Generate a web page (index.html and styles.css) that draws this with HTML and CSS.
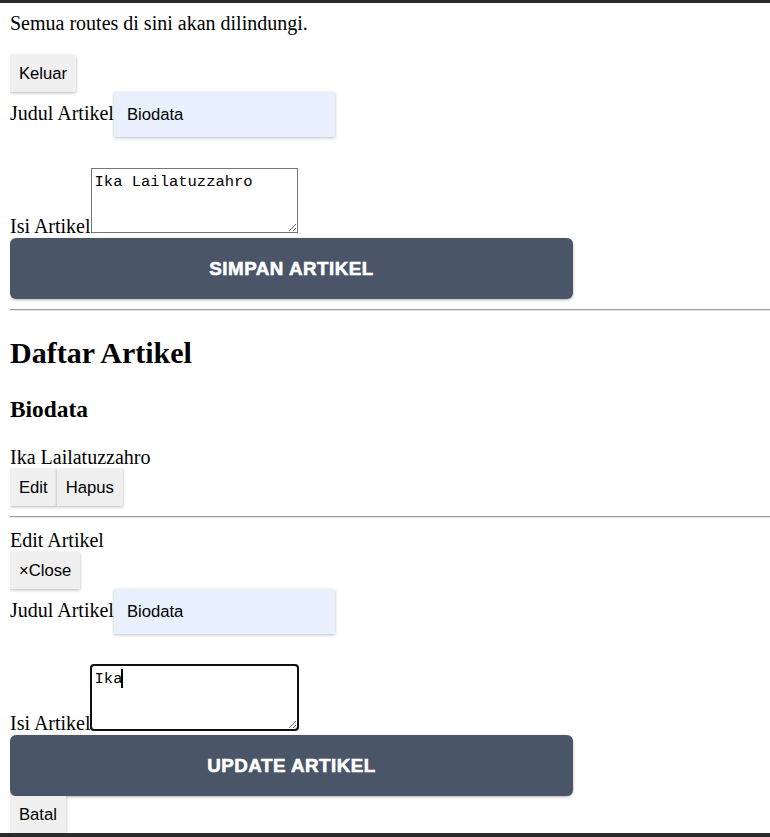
FILE: index.html
```html
<!DOCTYPE html>
<html lang="id">
<head>
<meta charset="utf-8">
<title>Artikel</title>
<link rel="stylesheet" href="styles.css">
</head>
<body>
<div class="frame frame-top"></div>
<main class="page">
  <p class="intro">Semua routes di sini akan dilindungi.</p>
  <div class="toolbar"><button class="btn" type="button">Keluar</button></div>
  <form class="article-form">
    <div class="field field-title"><label class="field-label">Judul Artikel</label><input class="text-input" type="text" value="Biodata"></div>
    <div class="field field-body"><label class="field-label">Isi Artikel</label><span class="area-wrap"><textarea class="text-area">Ika Lailatuzzahro</textarea></span></div>
    <button class="btn-primary" type="button">Simpan Artikel</button>
  </form>
  <div class="rule"></div>
  <h2 class="list-title">Daftar Artikel</h2>
  <article class="article">
    <h3 class="article-title">Biodata</h3>
    <div class="article-body">Ika Lailatuzzahro</div>
    <div class="toolbar"><button class="btn" type="button">Edit</button><button class="btn" type="button">Hapus</button></div>
  </article>
  <div class="rule"></div>
  <div class="edit-heading">Edit Artikel</div>
  <div class="toolbar"><button class="btn" type="button">×Close</button></div>
  <form class="article-form">
    <div class="field field-title"><label class="field-label">Judul Artikel</label><input class="text-input" type="text" value="Biodata"></div>
    <div class="field field-body"><label class="field-label">Isi Artikel</label><span class="area-wrap"><textarea class="text-area is-focused">Ika</textarea><span class="caret"></span></span></div>
    <button class="btn-primary" type="button">Update Artikel</button>
  </form>
  <div class="toolbar"><button class="btn" type="button">Batal</button></div>
</main>
<div class="frame frame-bottom"></div>
</body>
</html>
```
FILE: styles.css
```css
html {
  background: #ffffff;
  overflow-x: hidden;
}

body {
  margin: 0 0 0 10px;
  font-family: "Liberation Serif", "Times New Roman", serif;
  font-size: 20px;
  color: #000000;
}

.frame {
  position: fixed;
  left: 0;
  right: 0;
  background: #2b2b2b;
  z-index: 5;
}

.frame-top {
  top: 0;
  height: 3px;
}

.frame-bottom {
  bottom: 0;
  height: 4px;
}

.intro {
  margin: 12px 0 20px;
}

.toolbar {
  display: flex;
}

.btn {
  font-family: "Liberation Sans", Arial, sans-serif;
  font-size: 16.67px;
  line-height: 19px;
  color: #000000;
  background: #efefef;
  border: none;
  padding: 9px 9px;
  margin: 0;
  box-shadow: 0 1px 3px rgba(0, 0, 0, 0.28);
  cursor: pointer;
}

.article-form {
  margin: 0;
}

.field-title {
  margin-bottom: 31px;
}

.field-label {
  font-size: 20px;
}

.text-input {
  font-family: "Liberation Sans", Arial, sans-serif;
  font-size: 16.67px;
  color: #000000;
  background: #e8f0fe;
  border: none;
  width: 221px;
  height: 45px;
  box-sizing: border-box;
  padding: 0 13px;
  margin: 0;
  vertical-align: baseline;
  box-shadow: 0 1px 3px rgba(0, 0, 0, 0.25);
}

.area-wrap {
  position: relative;
  display: inline-block;
}

.text-area {
  font-family: "Liberation Mono", "Courier New", monospace;
  font-size: 15.5px;
  line-height: 18px;
  width: 207px;
  height: 65px;
  box-sizing: border-box;
  padding: 4px 3px;
  margin: 0;
  border: 1px solid #767676;
  border-radius: 0;
  vertical-align: baseline;
  resize: both;
  color: #000000;
  background: #ffffff;
}

.text-area.is-focused {
  outline: 2px solid #101010;
  outline-offset: -1px;
  border-radius: 3px;
}

.caret {
  position: absolute;
  left: 30px;
  top: 4px;
  width: 2px;
  height: 19px;
  background: #000000;
}

.btn-primary {
  display: block;
  width: 563px;
  height: 61px;
  margin: 0;
  border: none;
  border-radius: 6px;
  background: #4a5568;
  color: #ffffff;
  font-family: "Liberation Sans", Arial, sans-serif;
  font-weight: 700;
  font-size: 18.75px;
  letter-spacing: 0.5px;
  -webkit-text-stroke: 0.6px #ffffff;
  text-transform: uppercase;
  box-shadow: 0 1px 3px rgba(0, 0, 0, 0.3);
  cursor: pointer;
}

.rule {
  height: 0;
  margin: 10px 0;
  border-top: 1px solid #9a9a9a;
  border-bottom: 1px solid #e6e6e6;
}

.list-title {
  font-size: 30px;
  font-weight: 700;
  margin: 25px 0 26px;
}

.article-title {
  font-size: 23.4px;
  font-weight: 700;
  margin: 23.4px 0;
}

.article-body {
  margin: 0;
}

.edit-heading {
  margin: 0;
  padding-top: 1px;
}
```
